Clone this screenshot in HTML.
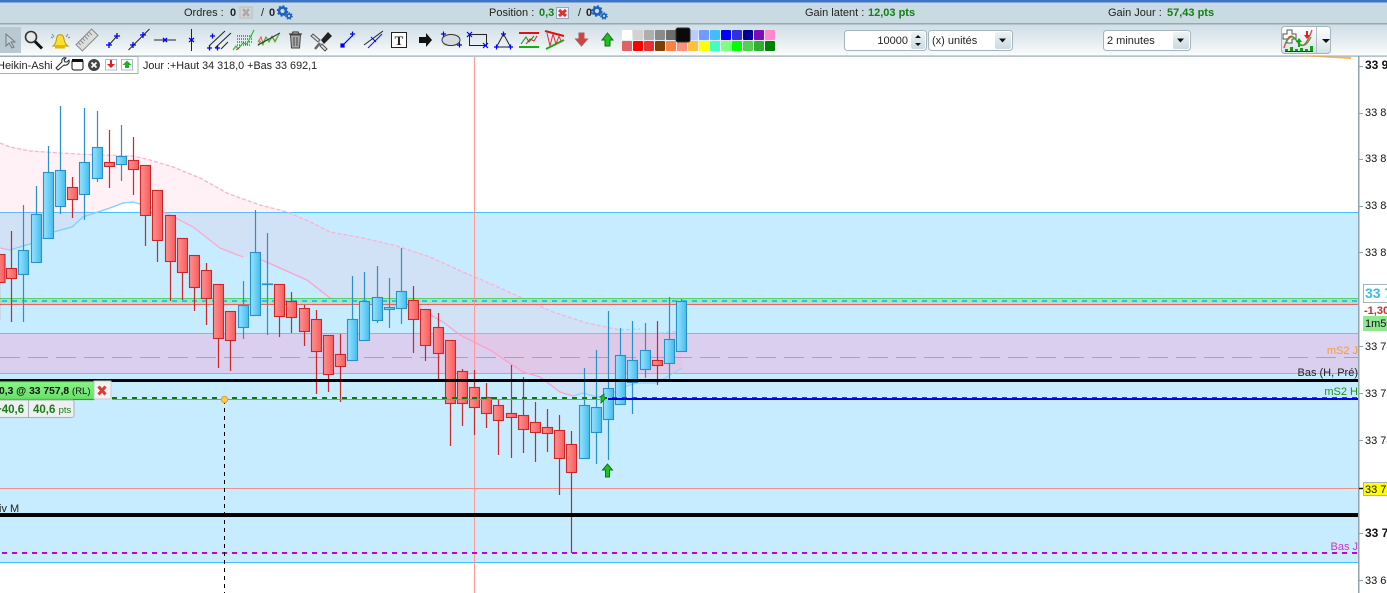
<!DOCTYPE html>
<html><head><meta charset="utf-8"><style>
html,body{margin:0;padding:0;background:#fff}
#p{position:relative;width:1387px;height:593px;overflow:hidden;font-family:"Liberation Sans",sans-serif;background:#fff}
svg{position:absolute;left:0;top:0}
text{font-family:"Liberation Sans",sans-serif}
</style></head><body><div id="p">
<svg width="1387" height="593" viewBox="0 0 1387 593" font-size="11">
<defs>
<linearGradient id="tb" x1="0" y1="0" x2="0" y2="1"><stop offset="0" stop-color="#cfdee6"/><stop offset=".5" stop-color="#e3ebf0"/><stop offset="1" stop-color="#fbfcfc"/></linearGradient>
<linearGradient id="bl" x1="0" y1="0" x2="1" y2="0"><stop offset="0" stop-color="#96e4ff"/><stop offset="1" stop-color="#45bcef"/></linearGradient>
<linearGradient id="rd" x1="0" y1="0" x2="1" y2="0"><stop offset="0" stop-color="#ff9090"/><stop offset="1" stop-color="#f75d5d"/></linearGradient>
<linearGradient id="gr" x1="0" y1="0" x2="0" y2="1"><stop offset="0" stop-color="#88f488"/><stop offset="1" stop-color="#66e066"/></linearGradient>
<linearGradient id="sel" x1="0" y1="0" x2="0" y2="1"><stop offset="0" stop-color="#fff"/><stop offset="1" stop-color="#d6e2e8"/></linearGradient>
<linearGradient id="dd" x1="0" y1="0" x2="0" y2="1"><stop offset="0" stop-color="#eef3f5"/><stop offset="1" stop-color="#ccdae0"/></linearGradient>
</defs>
<!-- top bars -->
<rect width="1387" height="2.5" fill="#3d74c8"/>
<rect y="2.5" width="1387" height="21" fill="#c9dae3"/>
<rect y="23" width="1387" height="1.5" fill="#97a9b4"/>
<rect y="24.5" width="1387" height="31" fill="url(#tb)"/>
<rect y="55.5" width="1387" height="1.2" fill="#9aabb6"/>
<g fill="#222">
<text x="184" y="16">Ordres :</text>
<text x="230" y="16" font-weight="bold">0</text>
<text x="261" y="16">/</text><text x="269" y="16" font-weight="bold">0</text>
<text x="489" y="16">Position :</text>
<text x="578" y="16">/</text><text x="586" y="16" font-weight="bold">0</text>
<text x="805" y="16">Gain latent :</text>
<text x="1108" y="16">Gain Jour :</text>
</g>
<g fill="#128012" font-weight="bold">
<text x="539" y="16">0,3</text>
<text x="868" y="16">12,03 pts</text>
<text x="1167" y="16">57,43 pts</text>
</g>
<rect x="240" y="7" width="12" height="11" fill="#d5d5d5" stroke="#bbb"/><path d="M243 9l6 7M249 9l-6 7" stroke="#aaa" stroke-width="2.5"/>
<rect x="556.500" y="7.500" width="12" height="11" fill="#eef3f7" stroke="#8fa9c0"/><path d="M559 10l7 6M566 10l-7 6" stroke="#e03030" stroke-width="3"/>
<g fill="none" stroke="#1a62c0"><circle cx="282.500" cy="11" r="3.400" stroke-width="2.600"/><circle cx="282.500" cy="11" r="5" stroke-width="1.400" stroke-dasharray="2 1.900"/><circle cx="289" cy="16" r="2" stroke-width="1.800"/><circle cx="289" cy="16" r="3.300" stroke-width="1" stroke-dasharray="1.500 1.500"/></g>
<g fill="none" stroke="#1a62c0"><circle cx="597" cy="11" r="3.400" stroke-width="2.600"/><circle cx="597" cy="11" r="5" stroke-width="1.400" stroke-dasharray="2 1.900"/><circle cx="604" cy="16" r="2" stroke-width="1.800"/><circle cx="604" cy="16" r="3.300" stroke-width="1" stroke-dasharray="1.500 1.500"/></g>

<!-- toolbar icons -->
<rect x="0" y="27" width="21" height="26" fill="#b9c9d1"/>
<path d="M6 34v12l3-3 3 5 2-1-3-5h4z" fill="#c4ced4" stroke="#6f7a80"/>
<circle cx="31" cy="37" r="5.500" fill="#e8e8e8" stroke="#333" stroke-width="1.600"/><path d="M35 41.500l7 7" stroke="#111" stroke-width="3"/>
<path d="M53 46c3-2 3-5 4-9 .8-3 5.500-3 6.500 0 1 4 1 7 4.500 9z" fill="#ffdf2e" stroke="#b89a00"/><rect x="55" y="46" width="10" height="2.500" fill="#e0b800"/><path d="M52 34l2 3M68 34l-2 3M51 37l2 1M70 37l-2 1" stroke="#888" fill="none"/>
<g transform="rotate(-45 87 40)"><rect x="76" y="35.500" width="22" height="9" fill="#ddd" stroke="#888"/><path d="M79 36v3M82 36v4M85 36v3M88 36v4M91 36v3M94 36v4" stroke="#888"/></g>
<g stroke="#222" fill="none"><path d="M109 45l8-9M128.500 50l21-21M154 40h22M191.500 29v22"/></g>
<g stroke="#00f" fill="none" stroke-width="1.300"><path d="M106 45h6M109 42v6M114 36h6M117 33v6M130 45h6M133 42v6M140 35h6M143 32v6M163 38l4 4M167 38l-4 4M189 38l5 4M194 38l-5 4"/></g>
<g stroke="#222" fill="none"><path d="M209 46l16-15M215 48l16-15M221 49l7-7"/></g><g stroke="#00f" fill="none" stroke-width="1.300"><path d="M207 48h5M209.500 45.500v5M215 48h5M217.500 45.500v5M210 36h5M212.500 33.500v5"/></g>
<path d="M237 36h15M237 39h15M237 42h15M237 45h13" stroke="#222" stroke-dasharray="1 1" fill="none"/><path d="M233 50l3-4 2 3 5-6 4 1 7-14" stroke="#2cc02c" stroke-width="1.200" fill="none"/><path d="M236 50l4-3" stroke="#e03030"/>
<path d="M258 42l3-5 2 6 3-6 3 5 3-6 3 5 3-5" stroke="#e53" fill="none"/><path d="M258 46l2-5 3 4 3-8 3 5 3-5 3 5 4-8" stroke="#2cc02c" fill="none"/><path d="M258 45l22-12" stroke="#333" fill="none"/>
<path d="M289 34h13M292 34l1-2h5l1 2" stroke="#444" fill="none" stroke-width="1.300"/><path d="M290.500 35l1 13h8l1-13z" fill="#aaa" stroke="#444"/><path d="M294 37v9M297 37v9" stroke="#444"/>
<path d="M313 34l7 6-2 2-7-6zM322 44l5 5-2 2-5-5z" fill="#ddd" stroke="#555"/><path d="M321 40l7-8 4 4-8 8z" fill="#222"/><path d="M315 49l5-6" stroke="#666" stroke-width="2.500"/>
<g stroke="#00f" fill="none" stroke-width="1.200"><path d="M342 46l5-5 6-6"/><rect x="341" y="44" width="3" height="3" fill="#00f"/><path d="M350 34h5M352.500 31.500v5"/></g>
<path d="M364 45l19-14" stroke="#222" fill="none"/><path d="M368 48l14-14" stroke="#11f" fill="none"/><path d="M371 37l5 5" stroke="#00f"/>
<rect x="391.500" y="32.500" width="15" height="15" fill="#fff" stroke="#222"/><text x="399" y="45" text-anchor="middle" font-size="13" font-weight="bold" fill="#222" style="font-family:'Liberation Serif',serif">T</text>
<path d="M419 37h7v-4l6 7-6 7v-4h-7z" fill="#111"/>
<rect x="443" y="34" width="17" height="12" fill="#d4dadd"/><ellipse cx="451" cy="40" rx="9" ry="5.500" fill="none" stroke="#333"/><path d="M441 34h5M443.500 31.500v5M457 45h5M459.500 42.500v5" stroke="#00f" stroke-width="1.200"/>
<rect x="469.500" y="34.500" width="17" height="11" fill="none" stroke="#222"/><path d="M467 32l5 5M472 32l-5 5M483 43l5 5M488 43l-5 5" stroke="#00f" stroke-width="1.200"/>
<path d="M503.500 34l-7 13h14z" fill="none" stroke="#222"/><path d="M501 34h5M503.500 31.500v5M494 47h5M496.500 44.500v5M508 47h5M510.500 44.500v5" stroke="#00f" stroke-width="1.200"/>
<path d="M519 33h20" stroke="#e01010" stroke-width="2"/><path d="M519 47h20" stroke="#10b010" stroke-width="2"/><path d="M521 44l5-7 3 5 5-6" stroke="#109010" fill="none"/><path d="M526 44l4-5 4 2 3-5" stroke="#e02020" fill="none"/>
<path d="M545 31l19 5" stroke="#e01010" stroke-width="2"/><path d="M546 49l18-9" stroke="#10b010" stroke-width="2"/><path d="M547 33l3 13 3-12 3 10 3-8 2 5" stroke="#e03030" fill="none"/>
<path d="M579 33h5v6h3.500l-6 7-6-7h3.500z" fill="#d84040" stroke="#a06060"/>
<path d="M605 46v-6h-3l5.500-7 5.500 7h-3v6z" fill="#20c020" stroke="#107010"/>
<!-- palette -->
<g stroke="none">
<rect x="622" y="30" width="10" height="10" rx="1" fill="#fff"/><rect x="633" y="30" width="10" height="10" rx="1" fill="#d2d2d2"/><rect x="644" y="30" width="10" height="10" rx="1" fill="#aeaeae"/><rect x="655" y="30" width="10" height="10" rx="1" fill="#8a8a8a"/><rect x="666" y="30" width="10" height="10" rx="1" fill="#6c6c6c"/>
<rect x="688" y="30" width="10" height="10" rx="1" fill="#b8ccff"/><rect x="699" y="30" width="10" height="10" rx="1" fill="#6f9bff"/><rect x="710" y="30" width="10" height="10" rx="1" fill="#42bbff"/><rect x="721" y="30" width="10" height="10" rx="1" fill="#0000ff"/><rect x="732" y="30" width="10" height="10" rx="1" fill="#3030dd"/><rect x="743" y="30" width="10" height="10" rx="1" fill="#000099"/><rect x="754" y="30" width="10" height="10" rx="1" fill="#7d0bb5"/><rect x="765" y="30" width="10" height="10" rx="1" fill="#ff88cc"/>
<rect x="622" y="41" width="10" height="10" rx="1" fill="#e06262"/><rect x="633" y="41" width="10" height="10" rx="1" fill="#ff0000"/><rect x="644" y="41" width="10" height="10" rx="1" fill="#e83030"/><rect x="655" y="41" width="10" height="10" rx="1" fill="#7f3f00"/><rect x="666" y="41" width="10" height="10" rx="1" fill="#ff8040"/><rect x="677" y="41" width="10" height="10" rx="1" fill="#ff9080"/><rect x="688" y="41" width="10" height="10" rx="1" fill="#ffc040"/><rect x="699" y="41" width="10" height="10" rx="1" fill="#ffff00"/><rect x="710" y="41" width="10" height="10" rx="1" fill="#40ffc0"/><rect x="721" y="41" width="10" height="10" rx="1" fill="#80ff80"/><rect x="732" y="41" width="10" height="10" rx="1" fill="#00ff00"/><rect x="743" y="41" width="10" height="10" rx="1" fill="#55d055"/><rect x="754" y="41" width="10" height="10" rx="1" fill="#30b030"/><rect x="765" y="41" width="10" height="10" rx="1" fill="#008000"/>
<rect x="676" y="28" width="14" height="14" rx="2" fill="#0a0a0a" stroke="#333"/>
</g>
<!-- inputs -->
<rect x="844.500" y="30.500" width="82" height="20" rx="3" fill="#fff" stroke="#a5b5be"/>
<text x="908" y="44" text-anchor="end" fill="#222">10000</text>
<rect x="911" y="32" width="14" height="17" rx="2" fill="url(#dd)"/><path d="M915 38l3-3 3 3zM915 43l3 3 3-3z" fill="#111"/>
<rect x="928.500" y="30.500" width="84" height="20" rx="3" fill="#fff" stroke="#a5b5be"/>
<text x="932" y="44" fill="#222">(x) unités</text>
<rect x="995" y="32" width="16" height="17" rx="2" fill="url(#dd)"/><path d="M999 38.500h7l-3.500 4z" fill="#111"/>
<rect x="1103.500" y="30.500" width="87" height="20" rx="3" fill="#fff" stroke="#a5b5be"/>
<text x="1107" y="44" fill="#222">2 minutes</text>
<rect x="1173" y="32" width="16" height="17" rx="2" fill="url(#dd)"/><path d="M1177 38.500h7l-3.500 4z" fill="#111"/>
<rect x="1281.500" y="26.500" width="49" height="27" rx="3" fill="url(#sel)" stroke="#a5b5be"/><path d="M1316.500 27v26" stroke="#b0bdc5"/>
<path d="M1322 39h8l-4 4z" fill="#111"/>
<path d="M1287 30h5v4h4v5h-4v4h-5v-4h-4v-5h4z" fill="#fff" stroke="#555"/><path d="M1284 48c4-14 8-14 12-8s8 12 16-10" fill="none" stroke="#e84040" stroke-width="1.300"/><path d="M1285 44c6-10 8-8 12-3s8 8 14-4" fill="none" stroke="#30b030" stroke-width="1.300"/><path d="M1298 47v-5h-2l3-4 3 4h-2v5z" fill="#10a010"/><path d="M1306 31h2v4h2l-3 4-3-4h2z" fill="#e02020"/><path d="M1285 49h3v2h-3zM1290 47h3v4h-3zM1295 49h3v2h-3zM1300 48h3v3h-3zM1305 49h3v2h-3zM1310 46h3v5h-3z" fill="#10a010"/><path d="M1285 51.500h28" stroke="#1030b0"/>

<!-- chart bands -->
<rect x="0" y="212" width="1358" height="350" fill="#c8ecff"/>
<path d="M0 212.500h1358M0 562.500h1358" stroke="#45c0ff"/>
<rect x="0" y="333" width="1358" height="41" fill="#dacfee"/>
<path d="M0 333.500h1358M0 373.500h1358" stroke="#ee88c4"/>
<!-- ribbon -->
<path d="M0 143L10 147L30 151L60 153L77 154L100 155L133 156L150 160L173 167L200 178L227 193L240 198L260 205L287 212L313 223L330 232L363 238L397 246L430 257L463 272L482 280L520 297L553 312L587 323L620 330L653 333L682 332L682 368L670 375L657 383L637 383L620 388L608 397L597 397L573 396L560 392L540 377L523 372L490 350L460 335L443 322L417 307L375 304L343 301L330 298L307 280L280 268L255 257L243 257L230 254L220 248L193 227L170 215L147 206L133 202L123 203L110 208L83 217L72 227L50 233L37 242L23 246L10 250L0 248Z" fill="#ffaac8" fill-opacity=".17"/>
<path d="M0 143L10 147L30 151L60 153L77 154L100 155L133 156L150 160L173 167L200 178L227 193L240 198L260 205L287 212L313 223L330 232L363 238L397 246L430 257L463 272L482 280L520 297L553 312L587 323L620 330" fill="none" stroke="#ffb0d4" stroke-width="1.300" stroke-dasharray="4 2"/>
<path d="M0 248L10 250" fill="none" stroke="#ffa8d0" stroke-width="1.300"/>
<path d="M147 206L170 215L193 227L220 248L243 257" fill="none" stroke="#ffa8d0" stroke-width="1.300"/>
<path d="M10 250L23 246L37 242L50 233L72 227L83 217L110 208L123 203L133 202L147 206" fill="none" stroke="#7fcfff" stroke-width="1.300"/>
<path d="M255 257L280 268L307 280L330 298L343 301L375 304L417 307L443 322L460 335L490 350L523 372L540 377L560 392L573 396" fill="none" stroke="#ffa0cc" stroke-width="1.300"/>
<path d="M573 396L583 393L597 397L608 397L620 388L637 383L657 383L670 375L682 368" fill="none" stroke="#8ed4ff" stroke-width="1.300"/>
<path d="M620 330L640 329M660 333L682 331" fill="none" stroke="#9fd8ff" stroke-width="1.300" stroke-dasharray="4 2"/>
<!-- level lines behind -->
<rect x="0" y="298" width="1358" height="6" fill="#a9e2c6"/>
<path d="M0 298.500h1358" stroke="#56d356"/>
<path d="M2 301h1356" stroke="#33bcff" stroke-width="2" stroke-dasharray="5 5"/>
<path d="M0 304.500h1358" stroke="#e96464"/>
<path d="M0 357.500h1358" stroke="#f0962a" stroke-dasharray="20 8"/>
<path d="M0 488.500h1358" stroke="#f29090"/>
<path d="M474.500 57v536" stroke="#ff9898"/>
<path d="M1298 56L1351 57V59z" fill="#ffb733"/>
<!-- wicks -->
<g stroke="#c82828" fill="none" stroke-width="1.200">
<path d="M-.5 254v66M11.500 231v91M72.500 177v41M109.500 130v58M133.500 137v58M145.500 165v81M157.500 190v72M170.500 215v86M182.500 238v62M194.500 255v56M206.500 263v62M218.500 284v84M230.500 311v60M279.500 284v53M291.500 292v41M304.500 305v41M316.500 310v84M328.500 335v57M340.500 334v68M413.500 286v67M425.500 309v52M438.500 313v67M450.500 340v106M462.500 369v57M474.500 370v65M486.500 383v45M498.500 400v55M511.500 365v93M523.500 377v76M535.500 402v60M547.500 409v43M559.500 415v80M657.500 321v64"/>
<path d="M571.500 431v122" stroke="#a83030"/>
</g>
<g stroke="#2a90c8" fill="none" stroke-width="1.200">
<path d="M23.500 205v117M36.500 186v77M48.500 146v92M60.500 106v108M84.500 108v112M97.500 111v71M121.500 125v56M243.500 281v58M255.500 210v105M267.500 233v102M352.500 276v84M364.500 272v68M377.500 266v57M389.500 278v50M401.500 248v76M584.500 368v90M596.500 350v114M608.500 311v149M620.500 328v76M632.500 321v93M645.500 323v55M669.500 297v83M681.500 299v52"/>
</g>
<!-- bodies -->
<g fill="url(#rd)" stroke="#c82828" stroke-width="1.100">
<rect x="-5" y="254.500" width="10" height="28"/><rect x="6.500" y="268.500" width="10" height="10"/><rect x="67.500" y="187.500" width="10" height="12"/><rect x="104.500" y="162.500" width="10" height="4"/><rect x="128.500" y="160.500" width="10" height="9"/><rect x="140.500" y="165.500" width="10" height="50"/><rect x="152.500" y="190.500" width="10" height="50"/><rect x="165.500" y="215.500" width="10" height="46"/><rect x="177.500" y="238.500" width="10" height="34"/><rect x="189.500" y="255.500" width="10" height="32"/><rect x="201.500" y="270.500" width="10" height="28"/><rect x="213.500" y="284.500" width="10" height="54"/><rect x="225.500" y="311.500" width="10" height="29"/><rect x="274.500" y="284.500" width="10" height="32"/><rect x="286.500" y="301.500" width="10" height="16"/><rect x="299.500" y="308.500" width="10" height="23"/><rect x="311.500" y="319.500" width="10" height="32"/><rect x="323.500" y="335.500" width="10" height="39"/><rect x="335.500" y="354.500" width="10" height="12"/><rect x="408.500" y="300.500" width="10" height="19"/><rect x="420.500" y="309.500" width="10" height="36"/><rect x="433.500" y="327.500" width="10" height="26"/><rect x="445.500" y="340.500" width="10" height="63"/><rect x="457.500" y="371.500" width="10" height="32"/><rect x="469.500" y="387.500" width="10" height="20"/><rect x="481.500" y="397.500" width="10" height="16"/><rect x="493.500" y="405.500" width="10" height="15"/><rect x="506.500" y="413.500" width="10" height="4"/><rect x="518.500" y="415.500" width="10" height="14"/><rect x="530.500" y="422.500" width="10" height="10"/><rect x="542.500" y="427.500" width="10" height="6"/><rect x="554.500" y="430.500" width="10" height="28"/><rect x="566.500" y="444.500" width="10" height="28"/><rect x="652.500" y="360.500" width="10" height="5"/>
</g>
<g fill="url(#bl)" stroke="#2a90c8" stroke-width="1.100">
<rect x="18.500" y="250.500" width="10" height="24"/><rect x="31.500" y="214.500" width="10" height="48"/><rect x="43.500" y="172.500" width="10" height="66"/><rect x="55.500" y="170.500" width="10" height="36"/><rect x="79.500" y="162.500" width="10" height="32"/><rect x="92.500" y="147.500" width="10" height="31"/><rect x="116.500" y="156.500" width="10" height="8"/><rect x="238.500" y="305.500" width="10" height="22"/><rect x="250.500" y="252.500" width="10" height="63"/><rect x="262.500" y="284" width="10" height=".6"/><rect x="347.500" y="319.500" width="10" height="41"/><rect x="359.500" y="301.500" width="10" height="39"/><rect x="372.500" y="297.500" width="10" height="23"/><rect x="384.500" y="307.500" width="10" height="2"/><rect x="396.500" y="291.500" width="10" height="17"/><rect x="579.500" y="405.500" width="10" height="53"/><rect x="591.500" y="407.500" width="10" height="25"/><rect x="603.500" y="388.500" width="10" height="31"/><rect x="615.500" y="355.500" width="10" height="49"/><rect x="627.500" y="360.500" width="10" height="22"/><rect x="640.500" y="350.500" width="10" height="19"/><rect x="664.500" y="339.500" width="10" height="24"/><rect x="676.500" y="301.500" width="10" height="50"/>
</g>
<!-- front lines -->
<rect x="0" y="379" width="1358" height="3" fill="#000"/>
<rect x="0" y="513" width="1358" height="4" fill="#000"/>
<path d="M112 399.500h488" stroke="#8a9296"/>
<path d="M112 398h1246" stroke="#0a7a0a" stroke-width="2" stroke-dasharray="5 5"/>
<rect x="608" y="398" width="750" height="2" fill="#0000f0"/>
<path d="M2 553h1356" stroke="#cc00cc" stroke-width="2" stroke-dasharray="5 5"/>
<path d="M224.500 400v193" stroke="#000" stroke-dasharray="4 4"/>
<circle cx="224.500" cy="399.500" r="3.200" fill="#ffc850" stroke="#e8a020"/>
<path d="M601 403v-6l-1 0 4-3v3l2 1-5 5z" fill="#20c020" stroke="#107010" stroke-width=".8"/>
<path d="M605.500 477v-7h-3l5-6 5 6h-3v7z" fill="#20c020" stroke="#0a7a0a"/>
<!-- order tag -->
<rect x="-2" y="381.500" width="96" height="18" fill="url(#gr)" stroke="#22a822" stroke-width="1.200"/>
<text x="-1" y="394" font-weight="bold" fill="#111" font-size="10.300">0,3 @ 33 757,8 <tspan font-weight="normal" font-size="9.500">(RL)</tspan></text>
<rect x="94" y="381" width="17" height="18" fill="#f2f2f2" stroke="#c4ccd0"/><path d="M98.500 386.500l7 8M105.500 386.500l-7 8" stroke="#dc3c3c" stroke-width="3"/>
<rect x="-3" y="400" width="77" height="17.500" rx="2" fill="#eef0f0" stroke="#a5b2ba"/><path d="M28.500 400v17" stroke="#a5b2ba"/>
<text x="-5" y="413" font-weight="bold" fill="#1a7a1a" font-size="11.500">+40,6</text>
<text x="33" y="413" font-weight="bold" fill="#1a7a1a" font-size="11.500">40,6 <tspan font-weight="normal" font-size="9.500">pts</tspan></text>
<!-- chart labels -->
<text x="-1" y="512" fill="#222">iv M</text>
<g font-size="11" text-anchor="end">
<text x="1358" y="354" fill="#ff9a22">mS2 J</text>
<text x="1358" y="376" fill="#222">Bas (H, Pré)</text>
<text x="1358" y="395" fill="#1a8f1a">mS2 H</text>
<text x="1358" y="550" fill="#cc33cc">Bas J</text>
</g>
<!-- legend -->
<rect x="-2" y="56.500" width="140" height="17" fill="#fff" stroke="#9fb0ba"/>
<text x="-3" y="69" fill="#222">Heikin-Ashi</text>
<path d="M56 68l6-6c-1-3 2-5 4-4l-2 2 1 2 2 0 2-2c1 3-2 6-5 5l-6 5z" fill="#fff" stroke="#222"/>
<rect x="72" y="59.500" width="11" height="10.500" rx="2" fill="#fff" stroke="#111"/><rect x="72" y="59" width="11" height="3" fill="#111"/>
<circle cx="94" cy="65" r="6" fill="#444"/><path d="M91.500 62.500l5 5M96.500 62.500l-5 5" stroke="#fff" stroke-width="1.800"/>
<rect x="105.500" y="59.500" width="11" height="10.500" fill="#fff" stroke="#a8bdd0"/><path d="M110 60v4h-3l4 4 4-4h-3v-4z" fill="#e02020"/>
<rect x="121.500" y="59.500" width="11" height="10.500" fill="#fff" stroke="#a8bdd0"/><path d="M125 68v-3h-2.500l4.500-4.500 4.500 4.500h-2.500v3z" fill="#20b020"/>
<text x="143" y="69" fill="#222" font-size="10.800">Jour :+Haut 34 318,0 +Bas 33 692,1</text>
<!-- axis -->
<rect x="1358" y="56" width="1.500" height="537" fill="#8fa3ae"/>
<path d="M1359 66.500h4M1359 113.500h4M1359 159.500h4M1359 206.500h4M1359 252.500h4M1359 346.500h4M1359 393.500h4M1359 440.500h4M1359 533.500h4M1359 580.500h4" stroke="#8fa3ae"/>
<path d="M1359 488.500h4" stroke="#111" stroke-width="1.500"/>
<g fill="#111">
<text x="1365" y="69" font-weight="bold" font-size="12">33 900</text>
<text x="1365" y="116">33 880</text>
<text x="1365" y="162">33 860</text>
<text x="1365" y="209">33 840</text>
<text x="1365" y="256">33 820</text>
<text x="1365" y="350">33 780</text>
<text x="1365" y="397">33 760</text>
<text x="1365" y="444">33 740</text>
<text x="1365" y="537" font-weight="bold" font-size="12">33 700</text>
<text x="1365" y="584">33 680</text>
</g>
<rect x="1363.500" y="284.500" width="30" height="18" fill="#fff" stroke="#a8b4ba"/>
<text x="1365" y="298" font-weight="bold" font-size="14" fill="#33bbff">33 799</text>
<rect x="1363" y="303" width="24" height="13" fill="#fff"/>
<text x="1364" y="314" font-weight="bold" fill="#c83030" font-size="11">-1,30</text>
<rect x="1363" y="316" width="24" height="15" fill="#90e890"/>
<text x="1365" y="327" fill="#111">1m50</text>
<rect x="1363.500" y="482.500" width="30" height="13" fill="#ffff00" stroke="#a8b4ba"/>
<text x="1365" y="493" fill="#111">33 720</text>
</svg>
</div></body></html>
